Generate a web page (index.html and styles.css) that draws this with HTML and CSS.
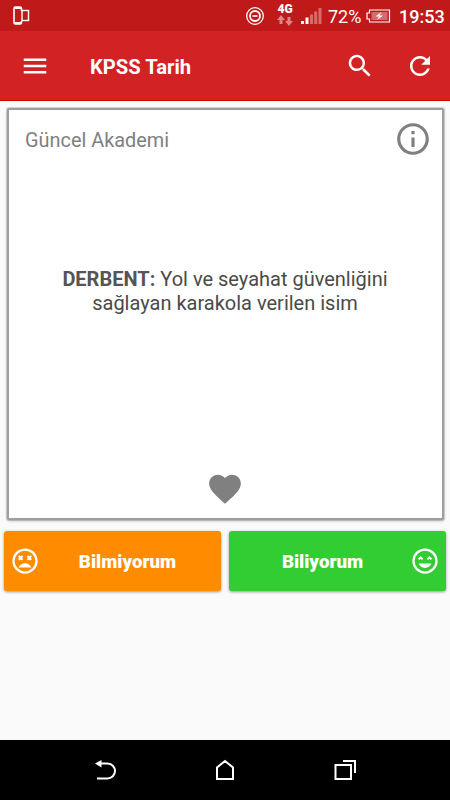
FILE: index.html
```html
<!DOCTYPE html>
<html lang="tr">
<head>
    <meta charset="UTF-8">
    <meta name="viewport" content="width=device-width, initial-scale=1.0">
    <title>KPSS Tarih</title>
    <link rel="stylesheet" href="styles.css">
</head>
<body>
    <div class="screen">
        <div class="status">
            <svg class="phone" width="18" height="20" viewBox="0 0 18 20">
                <path d="M9.500 5V2.500Q9.500 1 8 1H3.500Q2 1 2 2.500V16.500Q2 18 3.500 18H8Q9.500 18 9.500 16.500V15" fill="none" stroke="#fff" stroke-width="1.600"/>
                <path d="M2 2h8M2 17h8" stroke="#fff" stroke-width="2.200"/>
                <rect x="10" y="4.500" width="6.500" height="10" fill="none" stroke="#fff" stroke-width="1.400"/>
            </svg>
            <svg class="dnd" width="20" height="20" viewBox="0 0 20 20">
                <circle cx="10" cy="10" r="8.300" fill="none" stroke="#fff" stroke-width="1.300"/>
                <circle cx="10" cy="10" r="5" fill="none" stroke="#fff" stroke-width="1.800"/>
                <path d="M7.500 10h5" stroke="#fff" stroke-width="1.600"/>
            </svg>
            <div class="net">
                <span>4G</span>
                <svg width="16" height="11" viewBox="0 0 16 11">
                    <path d="M4 0l4 5H5.500v4h-3V5H0zM12 11l-4-5h2.500V2h3v4H16z" fill="#e08383"/>
                </svg>
            </div>
            <svg class="signal" width="21" height="16" viewBox="0 0 21 16">
                <path d="M0 13h3v3H0zM4.500 9.500h3V16h-3z" fill="#fff"/>
                <path d="M9 6.500h3V16H9zM13.200 3.500h3V16h-3zM17.500 0h3v16h-3z" fill="#d96a6a"/>
            </svg>
            <span class="percent">72%</span>
            <svg class="battery" width="25" height="14" viewBox="0 0 25 14">
                <path d="M3.500 1h20v12h-20v-3H1V4h2.500z" fill="none" stroke="#fff" stroke-width="1.200"/>
                <path d="M5.500 3h16v8h-16z" fill="#d96a6a"/>
                <path d="M15.500 3l-6 4.500h3.500L11 11l6-4.500h-3.500z" fill="#fff"/>
            </svg>
            <span class="time">19:53</span>
        </div>

        <div class="toolbar">
            <svg class="icon" viewBox="0 0 24 24"><path d="M3 18h18v-2H3v2zm0-5h18v-2H3v2zm0-7v2h18V6H3z"/></svg>
            <h1>KPSS Tarih</h1>
            <svg class="icon" viewBox="0 0 24 24"><path d="M15.500 14h-.79l-.28-.27C15.410 12.590 16 11.110 16 9.500 16 5.910 13.090 3 9.500 3S3 5.910 3 9.500 5.910 16 9.500 16c1.610 0 3.090-.59 4.230-1.570l.27.28v.79l5 4.990L20.490 19l-4.990-5zm-6 0C7.010 14 5 11.990 5 9.500S7.010 5 9.500 5 14 7.010 14 9.500 11.990 14 9.500 14z"/></svg>
            <svg class="icon refresh" viewBox="0 0 24 24"><path d="M17.650 6.350C16.200 4.900 14.210 4 12 4c-4.420 0-7.990 3.580-7.990 8s3.570 8 7.990 8c3.730 0 6.840-2.550 7.730-6h-2.080c-.82 2.330-3.040 4-5.650 4-3.310 0-6-2.690-6-6s2.690-6 6-6c1.660 0 3.140.69 4.220 1.780L13 11h7V4l-2.350 2.350z"/></svg>
        </div>

        <div class="card">
            <div class="card_top">
                <span>Güncel Akademi</span>
                <svg class="icon_lg" viewBox="0 0 24 24"><path d="M11 17h2v-6h-2v6zm1-15C6.480 2 2 6.480 2 12s4.480 10 10 10 10-4.480 10-10S17.520 2 12 2zm0 18c-4.410 0-8-3.590-8-8s3.590-8 8-8 8 3.590 8 8-3.590 8-8 8zM11 9h2V7h-2v2z"/></svg>
            </div>
            <p class="question"><b>DERBENT:</b> Yol ve seyahat güvenliğini<br>sağlayan karakola verilen isim</p>
            <svg class="icon_lg heart" viewBox="0 0 24 24"><path d="M12 21.350l-1.450-1.320C5.400 15.360 2 12.280 2 8.500 2 5.420 4.420 3 7.500 3c1.740 0 3.410.81 4.500 2.090C13.090 3.810 14.760 3 16.500 3 19.580 3 22 5.420 22 8.500c0 3.780-3.400 6.860-8.550 11.540L12 21.350z"/></svg>
        </div>

        <div class="buttons">
            <div class="btn orange">
                <svg class="icon" viewBox="0 0 24 24">
                    <circle class="line" cx="12" cy="12" r="9.200"/>
                    <path class="cross" d="M7 8l3 3M10 8l-3 3M14 8l3 3M17 8l-3 3"/>
                    <path d="M12 13.700c-2.300 0-4.300 1.400-5.100 3.500h10.200c-.8-2.100-2.800-3.500-5.100-3.500z"/>
                </svg>
                <span>Bilmiyorum</span>
            </div>
            <div class="btn green">
                <span>Biliyorum</span>
                <svg class="icon" viewBox="0 0 24 24">
                    <circle class="line" cx="12" cy="12" r="9.200"/>
                    <path class="cross" d="M6.900 10.700l1.600-1.700 1.600 1.700M13.900 10.700l1.600-1.700 1.600 1.700"/>
                    <path d="M6.900 14c.8 2.100 2.800 3.500 5.100 3.500s4.300-1.400 5.100-3.500z"/>
                </svg>
            </div>
        </div>

        <div class="nav">
            <svg width="24" height="24" viewBox="0 0 24 24">
                <path d="M6 5.500h8.500a7 7 0 0 1 0 15H4" fill="none" stroke="#fff" stroke-width="2"/>
                <path d="M2 5.500L8.500 2v7.500z" fill="#fff"/>
            </svg>
            <svg width="24" height="24" viewBox="0 0 24 24">
                <path d="M4 21V9.500L12 3l8 6.500V21z" fill="none" stroke="#fff" stroke-width="2"/>
            </svg>
            <svg width="24" height="24" viewBox="0 0 24 24">
                <path d="M2.500 7h15.500v14h-15.500zM10 3h12v12" fill="none" stroke="#fff" stroke-width="2"/>
            </svg>
        </div>
    </div>
</body>
</html>
```
FILE: styles.css
```css
*{
    padding: 0;
    margin: 0;
    box-sizing: border-box;
}
body{
    font-family: Roboto, "Liberation Sans", sans-serif;
    background-color: #fafafa;
}
svg{
    display: block;
    flex-shrink: 0;
}
.screen{
    width: 450px;
    height: 800px;
    display: flex;
    flex-direction: column;
    overflow: hidden;
}
.status{
    height: 31px;
    padding: 0 6px 0 12px;
    display: flex;
    align-items: center;
    background-color: #bf191a;
    color: white;
}
.status .phone{
    margin-top: 1px;
}
.status .dnd{
    margin-left: auto;
}
.status .net{
    width: 16px;
    margin-left: 12px;
}
.status .net span{
    display: block;
    height: 10px;
    font-size: 12px;
    line-height: 9px;
    font-weight: 900;
    text-align: center;
}
.status .signal{
    margin-left: 8px;
}
.status .percent{
    width: 34px;
    margin-left: 6px;
    font-size: 18px;
    line-height: 31px;
    padding-top: 2px;
}
.status .battery{
    margin-left: 4px;
}
.status .time{
    width: 45px;
    margin-left: 8px;
    font-size: 18px;
    font-weight: 500;
    line-height: 31px;
    padding-top: 2px;
}
.toolbar{
    height: 70px;
    padding: 1px 15px 0 20px;
    display: flex;
    align-items: center;
    background-color: #d22224;
    border-bottom: 1px solid #d50000;
    color: white;
}
.icon{
    width: 30px;
    height: 30px;
    fill: white;
}
.toolbar h1{
    flex: 1;
    margin-left: 40px;
    font-size: 20.2px;
    font-weight: 700;
    line-height: 30px;
    padding-top: 1px;
}
.toolbar .refresh{
    margin-left: 30px;
}
.card{
    height: 412px;
    margin: 7px 6px 0 7px;
    padding: 10px 10px 10px 16px;
    display: flex;
    flex-direction: column;
    background-color: white;
    border: 2px solid #9e9e9e;
    border-radius: 2px;
    box-shadow: 0 0 0 1px rgba(0, 0, 0, 0.12), 0 1px 3px rgba(0, 0, 0, 0.25);
}
.card_top{
    display: flex;
    justify-content: space-between;
    align-items: center;
    font-size: 19.9px;
    color: #808080;
}
.card_top span{
    padding-top: 3px;
}
.icon_lg{
    width: 38px;
    height: 38px;
    fill: #808080;
}
.question{
    flex: 1;
    padding-top: 109px;
    padding-right: 7px;
    font-size: 20px;
    line-height: 24px;
    text-align: center;
    color: #4a4a4a;
}
.question b{
    color: #555;
}
.heart{
    align-self: center;
    margin-right: 7px;
}
.buttons{
    display: flex;
    gap: 8px;
    padding: 11px 4px 0;
}
.btn{
    flex: 1;
    height: 60px;
    padding: 0 6px;
    display: flex;
    align-items: center;
    border-radius: 3px;
    color: white;
    font-size: 18.7px;
    font-weight: 900;
    box-shadow: 0 1px 3px rgba(0, 0, 0, 0.4);
}
.btn span{
    flex: 1;
    padding-top: 2px;
    text-align: center;
}
.btn .line,
.btn .cross{
    fill: none;
    stroke: white;
    stroke-width: 1.8;
}
.btn .cross{
    stroke-width: 1.5;
}
.orange{
    background-color: #ff8c00;
}
.green{
    background-color: #32cd32;
}
.nav{
    height: 60px;
    margin-top: auto;
    padding: 0 93px;
    display: flex;
    justify-content: space-between;
    align-items: center;
    background-color: black;
}
```
